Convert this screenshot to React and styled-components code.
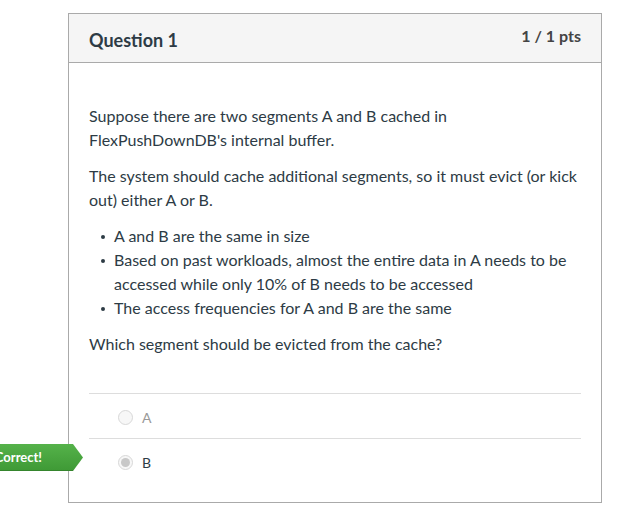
import React from "react";
import styled, { createGlobalStyle } from "styled-components";

const Global = createGlobalStyle`
	body {
		margin: 0;
		background: #fff;
		font-family: Lato, "Open Sans", sans-serif;
		color: #2d3b45;
	}
`;

const Card = styled.div`
	margin: 13px 0 0 68px;
	width: 532px;
	border: 1px solid #aaa;
`;

const Header = styled.div`
	display: flex;
	justify-content: space-between;
	align-items: flex-start;
	height: 49px;
	box-sizing: border-box;
	padding: 13px 20px 0 20px;
	background: #f5f5f5;
	border-bottom: 1px solid #aaa;
`;

const Title = styled.h2`
	margin: 1px 0 0;
	font-size: 18px;
	font-weight: 700;
	line-height: 24px;
`;

const Points = styled.div`
	font-size: 16px;
	font-weight: 700;
	line-height: 18px;
	color: #444;
`;

const Body = styled.div`
	padding: 41px 20px 19px;
	font-size: 16px;
	line-height: 24px;
`;

const Para = styled.p`
	margin: 0 0 12px;
`;

const List = styled.ul`
	margin: 0 0 12px;
	padding-left: 25px;
	list-style: none;
`;

const Item = styled.li`
	position: relative;
	&::before {
		content: "";
		position: absolute;
		left: -13px;
		top: 11px;
		width: 4px;
		height: 4px;
		border-radius: 50%;
		background: #2d3b45;
	}
`;

const Answers = styled.div`
	margin-top: 37px;
`;

const Answer = styled.div`
	position: relative;
	display: flex;
	align-items: center;
	gap: 9px;
	height: 39px;
	padding: 4px 0 1px 29px;
	border-top: 1px solid #ddd;
	font-size: 14px;
	color: ${(p) => (p.$picked ? "#2d3b45" : "#999")};
`;

const Radio = styled.span`
	width: 13px;
	height: 13px;
	border-radius: 50%;
	border: 1px solid #d8d8d8;
	background: #f7f7f7;
	display: flex;
	align-items: center;
	justify-content: center;
	&::after {
		content: "";
		width: 9px;
		height: 9px;
		border-radius: 50%;
		background: ${(p) => (p.$checked ? "#c8c8c8" : "transparent")};
	}
`;

const Badge = styled.div`
	position: absolute;
	right: calc(100% + 6px);
	top: 5px;
	display: flex;
	align-items: center;
	height: 27px;
	padding: 0 41px 0 40px;
	background: linear-gradient(#55b24a, #3f9a36);
	border-bottom: 1px solid #35852d;
	box-sizing: border-box;
	color: #fff;
	font-size: 13px;
	font-weight: 700;
	white-space: nowrap;
	clip-path: polygon(0 0, calc(100% - 10px) 0, 100% 50%, calc(100% - 10px) 100%, 0 100%);
`;

export default function App() {
	return (
		<>
			<Global />
			<Card>
				<Header>
					<Title>Question 1</Title>
					<Points>1 / 1 pts</Points>
				</Header>
				<Body>
					<Para>Suppose there are two segments A and B cached in FlexPushDownDB's internal buffer.</Para>
					<Para>The system should cache additional segments, so it must evict (or kick out) either A or B.</Para>
					<List>
						<Item>A and B are the same in size</Item>
						<Item>Based on past workloads, almost the entire data in A needs to be accessed while only 10% of B needs to be accessed</Item>
						<Item>The access frequencies for A and B are the same</Item>
					</List>
					<Para>Which segment should be evicted from the cache?</Para>
					<Answers>
						<Answer>
							<Radio />A
						</Answer>
						<Answer $picked>
							<Badge>Correct!</Badge>
							<Radio $checked />B
						</Answer>
					</Answers>
				</Body>
			</Card>
		</>
	);
}
